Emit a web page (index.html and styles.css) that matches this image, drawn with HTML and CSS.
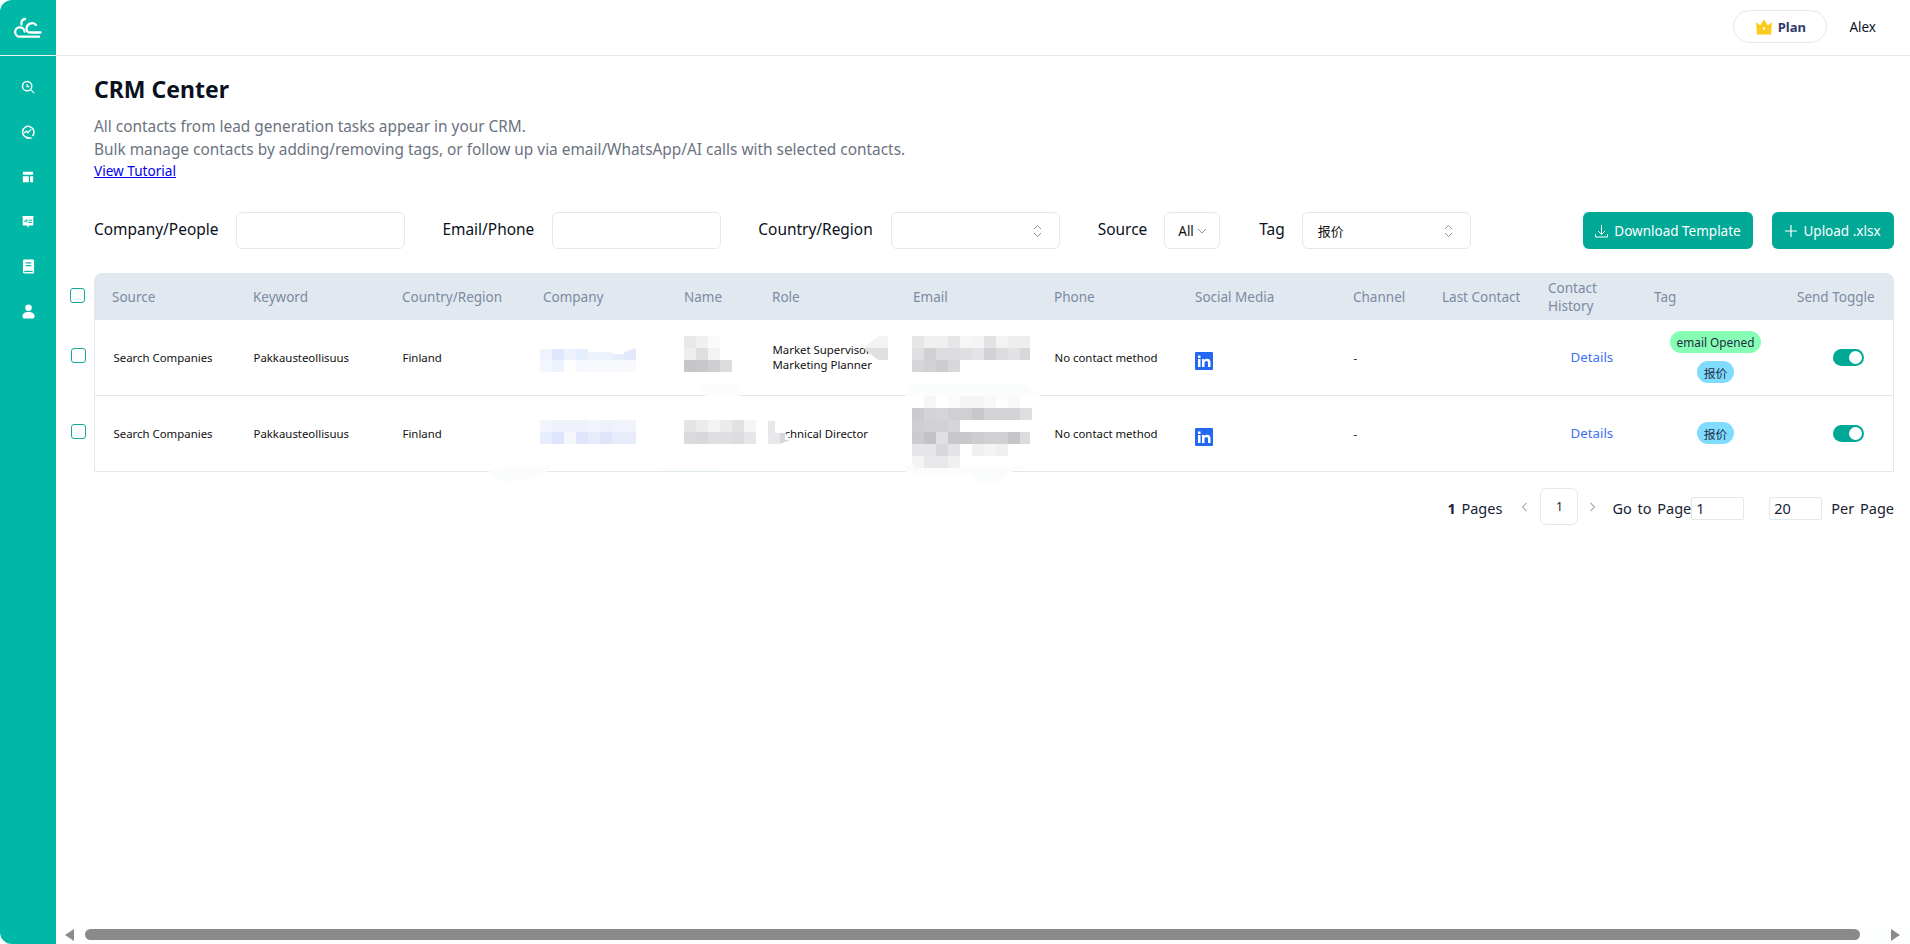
FILE: index.html
```html
<!DOCTYPE html>
<html lang="en">
<head>
    <meta charset="UTF-8">
    <meta name="viewport" content="width=device-width, initial-scale=1.0">
    <title>CRM Center</title>
    <link rel="stylesheet" href="styles.css">
</head>
<body>
<div class="app">
    <aside class="sidebar">
        <div class="logo">
            <svg width="30" height="26" viewBox="13 15 30 26" fill="none" stroke="#fff" stroke-width="2.300" stroke-linecap="round">
                <path d="M25 19c-2.500 .5-4 2.500-3.500 5.500"/>
                <path d="M24.500 31.500a4.700 4.700 0 1 0-4.500 5.200H39"/>
                <path d="M36 25a5.500 5.500 0 0 0-9.500 3.500c0 2.400 1.500 4 3.500 4H40.500"/>
            </svg>
        </div>
        <nav class="side-nav">
            <a class="side-item">
                <svg width="14" height="14" viewBox="0 0 16 16" fill="none" stroke="#fff" stroke-width="1.700">
                    <circle cx="7" cy="7" r="5.300"/>
                    <path d="M11 11l3.800 3.800" stroke-linecap="round" stroke-width="1.300"/>
                    <path d="M7 4.500V7.500H9.500" stroke-width="1.400"/>
                </svg>
            </a>
            <a class="side-item">
                <svg width="14" height="14" viewBox="0 0 16 16" fill="none" stroke="#fff" stroke-width="1.700">
                    <path d="M13 12.500A6.500 6.500 0 1 0 10 14.300"/>
                    <path d="M3.500 9L6.500 7l1.500 1.800L11.500 5" stroke-width="1.400"/>
                    <path d="M6 15h6.500" stroke-width="1.300"/>
                </svg>
            </a>
            <a class="side-item">
                <svg width="12" height="12" viewBox="0 0 14 14" fill="#fff">
                    <path d="M1 1h12v3.500H1zM1 6h7v7H1zM9.500 6H13v7H9.500z"/>
                </svg>
            </a>
            <a class="side-item">
                <svg width="14" height="14" viewBox="0 0 16 16" fill="#fff">
                    <path d="M1.500 1h13v1.300H14v9.700H8.700v2H7.300v-2H2V2.300h-.5zM3.500 8.500L6 6.300V5l-2.500 2.200zM6 8.500h1.200V5H6zM8.500 5.300v1.200h4V5.300zM8.500 8v1.200h4V8z" fill-rule="evenodd"/>
                </svg>
            </a>
            <a class="side-item">
                <svg width="13" height="15" viewBox="0 0 14 16" fill="#fff">
                    <path d="M2.500 .5h9A1.500 1.500 0 0 1 13 2v12.500a1 1 0 0 1-1 1H2.500A1.500 1.500 0 0 1 1 14V2A1.500 1.500 0 0 1 2.500 .5zM4 3.500v1.300h6V3.500zM4 6.300v1.300h6V6.300zM2.500 12.500v1.500H11.500v-1.500z" fill-rule="evenodd"/>
                </svg>
            </a>
            <a class="side-item">
                <svg width="13" height="15" viewBox="0 0 14 16" fill="#fff">
                    <circle cx="7" cy="4" r="3.500"/>
                    <path d="M0.500 13c0-3 3-4.500 6.500-4.500s6.500 1.500 6.500 4.500c0 1.500-1 2.500-2.500 2.500H3C1.500 15.500 .5 14.500 .5 13z"/>
                </svg>
            </a>
        </nav>
    </aside>

    <div class="main">
        <header class="topbar">
            <button class="plan-btn">
                <svg width="18" height="16" viewBox="0 0 18 16" fill="#fdc91a">
                    <path d="M1 3l4 3.500L9 .5l4 6L17 3l-1 12.500H2z"/>
                    <circle cx="9" cy="9.500" r="1.200" fill="#fff"/>
                </svg>
                Plan
            </button>
            <span class="user-name">Alex</span>
        </header>

        <div class="content">
            <h1>CRM Center</h1>
            <p class="desc">All contacts from lead generation tasks appear in your CRM.</p>
            <p class="desc">Bulk manage contacts by adding/removing tags, or follow up via email/WhatsApp/AI calls with selected contacts.</p>
            <a class="tutorial" href="#">View Tutorial</a>

            <div class="filters">
                <label class="filter"><span class="filter-label">Company/People</span> <input class="field"></label>
                <label class="filter"><span class="filter-label">Email/Phone</span> <input class="field"></label>
                <div class="filter"><span class="filter-label">Country/Region</span>
                    <div class="field select">
                        <span></span>
                        <svg class="updown" width="9" height="14" viewBox="0 0 9 14"><path d="M1 5l3.500-3.500L8 5M1 9l3.500 3.500L8 9"/></svg>
                    </div>
                </div>
                <div class="filter filter-tight filter-source"><span class="filter-label">Source</span>
                    <div class="field select select-small">
                        <span>All</span>
                        <svg class="updown" width="10" height="6" viewBox="0 0 10 6"><path d="M1 1l4 4 4-4"/></svg>
                    </div>
                </div>
                <div class="filter filter-tight filter-tag"><span class="filter-label">Tag</span>
                    <div class="field select">
                        <span class="cjk">报价</span>
                        <svg class="updown" width="9" height="14" viewBox="0 0 9 14"><path d="M1 5l3.500-3.500L8 5M1 9l3.500 3.500L8 9"/></svg>
                    </div>
                </div>
                <div class="actions">
                    <button class="btn btn-download">
                        <svg width="13" height="14" viewBox="0 0 13 14" fill="none" stroke="#fff"><path d="M6.500 1v9M3 7l3.500 3.500L10 7M.5 10v3h12v-3"/></svg>
                        Download Template
                    </button>
                    <button class="btn btn-upload">
                        <svg width="12" height="12" viewBox="0 0 12 12" fill="none" stroke="#fff" stroke-width="1.200"><path d="M6 0v12M0 6h12"/></svg>
                        Upload .xlsx
                    </button>
                </div>
            </div>

            <div class="table-area">
                <div class="checks">
                    <div class="check-cell check-head"><span class="checkbox"></span></div>
                    <div class="check-cell check-row"><span class="checkbox"></span></div>
                    <div class="check-cell check-row"><span class="checkbox"></span></div>
                </div>
                <div class="table-wrap">
                    <table class="crm-table">
                        <colgroup>
                            <col class="w141"><col class="w149"><col class="w141"><col class="w141"><col class="w88">
                            <col class="w141"><col class="w141"><col class="w141"><col class="w158"><col class="w89">
                            <col class="w106"><col class="w106"><col class="w143"><col class="w115">
                        </colgroup>
                        <thead>
                            <tr>
                                <th>Source</th><th>Keyword</th><th>Country/Region</th><th>Company</th><th>Name</th>
                                <th>Role</th><th>Email</th><th>Phone</th><th>Social Media</th><th>Channel</th>
                                <th>Last Contact</th><th>Contact History</th><th>Tag</th><th>Send Toggle</th>
                            </tr>
                        </thead>
                        <tbody>
                            <tr>
                                <td>Search Companies</td><td>Pakkausteollisuus</td><td>Finland</td><td></td><td></td>
                                <td>Market Supervisor<br>Marketing Planner</td><td></td><td>No contact method</td>
                                <td><svg class="linkedin" width="18" height="18" viewBox="0 0 18 18"><rect width="18" height="18" rx="1" fill="#2468f2"/><path fill="#fff" d="M3 7h2.500v8H3zM3 3.500h2.500V6H3zM7 7h2.400v1.200C10 7.300 11 6.800 12.200 6.800c2.300 0 3.300 1.400 3.300 3.800V15H13v-3.900c0-1.300-.4-2.100-1.500-2.100S9.500 9.800 9.500 11.100V15H7z"/></svg></td>
                                <td>-</td><td></td><td><a class="details">Details</a></td>
                                <td class="tag-cell"><div class="tags"><span class="tag tag-green">email Opened</span><span class="tag tag-blue cjk">报价</span></div></td>
                                <td><span class="toggle"></span></td>
                            </tr>
                            <tr>
                                <td>Search Companies</td><td>Pakkausteollisuus</td><td>Finland</td><td></td><td></td>
                                <td>Technical Director</td><td></td><td>No contact method</td>
                                <td><svg class="linkedin" width="18" height="18" viewBox="0 0 18 18"><rect width="18" height="18" rx="1" fill="#2468f2"/><path fill="#fff" d="M3 7h2.500v8H3zM3 3.500h2.500V6H3zM7 7h2.400v1.200C10 7.300 11 6.800 12.200 6.800c2.300 0 3.300 1.400 3.300 3.800V15H13v-3.900c0-1.300-.4-2.100-1.500-2.100S9.500 9.800 9.500 11.100V15H7z"/></svg></td>
                                <td>-</td><td></td><td><a class="details">Details</a></td>
                                <td class="tag-cell"><div class="tags"><span class="tag tag-blue cjk">报价</span></div></td>
                                <td><span class="toggle"></span></td>
                            </tr>
                        </tbody>
                    </table>

                    <!-- redacted areas, viewBox is in page coordinates -->
                    <svg class="mosaic" width="1800" height="198" viewBox="94 273 1800 198">
                        <g fill="#fbfcfc">
                            <path d="M697 385h44l-1 11h-34zM906 386l10-2h110l14 12h-30l-2 5-20 1-8-6H906zM487 470l18-4h46l-8 10-40 6zM906 466h120l-16 6-10 10h-20l-10-8h-50l-14-2zM660 468h60v3h-60z"/>
                        </g>
                        <!-- company, row 1 -->
                        <path fill="#eff3fd" d="M540 349h12v11h-12z"/><path fill="#dfe7fd" d="M552 349h12v11h-12z"/><path fill="#eef1fb" d="M564 349h12v11h-12z"/><path fill="#e4eefc" d="M576 349h12v11h-12z"/>
                        <path fill="#eef2fb" d="M588 352h24v8h-24z"/><path fill="#e8edfb" d="M612 354h12v6h-12z"/><path fill="#e4e9fa" d="M624 352l12-4v12h-12z"/>
                        <path fill="#f3f6fe" d="M540 360h12v12h-12z"/><path fill="#ecf2fe" d="M552 360h12v12h-12z"/><path fill="#fdfefe" d="M564 360h12v12h-12z"/><path fill="#f5f8fe" d="M576 360h12v12h-12z"/><path fill="#f7f9fd" d="M588 360h48v12h-48z"/>
                        <!-- name, row 1 -->
                        <path fill="#e8e8ea" d="M684 336h12v12h-12z"/><path fill="#f0f0f1" d="M696 336h12v12h-12z"/><path fill="#fbfbfb" d="M708 336h12v12h-12z"/>
                        <path fill="#eeeeef" d="M684 348h12v12h-12z"/><path fill="#dedee0" d="M696 348h12v12h-12z"/><path fill="#f3f3f4" d="M708 348h12v12h-12z"/>
                        <path fill="#c6c6ca" d="M684 360h12v12h-12z"/><path fill="#c8c8cb" d="M696 360h12v12h-12z"/><path fill="#cfcfd2" d="M708 360h12v12h-12z"/><path fill="#dcdcde" d="M720 360h12v12h-12z"/>
                        <!-- role, row 1 -->
                        <path fill="#f3f3f4" d="M863 348l16-12h9v12z"/><path fill="#e0e0e2" d="M863 348h25v12h-10z"/>
                        <!-- email, row 1 -->
                        <path fill="#e6e6e8" d="M912 336h12v12h-12z"/><path fill="#f0f0f1" d="M924 336h24v12h-24z"/><path fill="#e6e6e8" d="M948 336h12v12h-12z"/><path fill="#f6f6f7" d="M960 336h12v12h-12z"/><path fill="#f4f4f5" d="M972 336h12v12h-12z"/><path fill="#e2e2e5" d="M984 336h12v12h-12z"/><path fill="#f3f3f4" d="M996 336h12v12h-12z"/><path fill="#eeeeef" d="M1008 336h22v12h-22z"/>
                        <path fill="#e0e0e2" d="M912 348h12v12h-12z"/><path fill="#d0d0d3" d="M924 348h12v12h-12z"/><path fill="#dcdce0" d="M936 348h24v12h-24z"/><path fill="#dfdfe2" d="M960 348h12v12h-12z"/><path fill="#e4e4e6" d="M972 348h12v12h-12z"/><path fill="#d2d2d6" d="M984 348h12v12h-12z"/><path fill="#dcdcdf" d="M996 348h12v12h-12z"/><path fill="#e2e2e4" d="M1008 348h12v12h-12z"/><path fill="#d8d8dc" d="M1020 348h10v12h-10z"/>
                        <path fill="#d6d6d9" d="M912 360h12v12h-12z"/><path fill="#d2d2d5" d="M924 360h12v12h-12z"/><path fill="#cdcdd0" d="M936 360h12v12h-12z"/><path fill="#d8d8db" d="M948 360h12v12h-12z"/>
                        <!-- company, row 2 -->
                        <path fill="#f3f5fc" d="M540 420h12v12h-12z"/><path fill="#eef2fc" d="M552 420h12v12h-12z"/><path fill="#eff2fa" d="M564 420h12v12h-12z"/><path fill="#eef2fc" d="M576 420h12v12h-12z"/><path fill="#f3f5fc" d="M588 420h12v12h-12z"/><path fill="#edf1fc" d="M600 420h12v12h-12z"/><path fill="#f0f3fb" d="M612 420h24v12h-24z"/>
                        <path fill="#e8edfb" d="M540 432h12v12h-12z"/><path fill="#dde5fc" d="M552 432h12v12h-12z"/><path fill="#f4f6fb" d="M564 432h12v12h-12z"/><path fill="#dfe6fc" d="M576 432h12v12h-12z"/><path fill="#e8ecfa" d="M588 432h12v12h-12z"/><path fill="#dee5fb" d="M600 432h12v12h-12z"/><path fill="#e8ecfa" d="M612 432h24v12h-24z"/>
                        <!-- name, row 2 -->
                        <path fill="#e4e4e6" d="M684 420h12v12h-12z"/><path fill="#ebebec" d="M696 420h12v12h-12z"/><path fill="#f3f3f4" d="M708 420h12v12h-12z"/><path fill="#ebebec" d="M720 420h12v12h-12z"/><path fill="#e2e2e4" d="M732 420h12v12h-12z"/><path fill="#f5f5f6" d="M744 420h12v12h-12z"/>
                        <path fill="#dbdbdd" d="M684 432h12v12h-12z"/><path fill="#d8d8da" d="M696 432h12v12h-12z"/><path fill="#dfdfe1" d="M708 432h24v12h-24z"/><path fill="#dcdcdf" d="M732 432h12v12h-12z"/><path fill="#e6e6e8" d="M744 432h12v12h-12z"/>
                        <!-- role, row 2 -->
                        <path fill="#e8e8ea" d="M768 421h7l10 12h-5v11h-12z"/><path fill="#d8d8db" d="M780 433h5l5 7-10 4z"/><path fill="#fff" d="M775 421h10v12h-10zM785 433l5 7h-5z"/>
                        <!-- email, row 2 -->
                        <path fill="#f6f6f7" d="M924 396h12v12h-12z"/><path fill="#fbfbfb" d="M948 396h12v12h-12z"/><path fill="#f5f5f6" d="M960 396h24v12h-24z"/><path fill="#f8f8f9" d="M984 396h12v12h-12zM1008 396h12v12h-12z"/>
                        <path fill="#cccccf" d="M912 408h12v12h-12z"/><path fill="#d4d4d6" d="M924 408h12v12h-12z"/><path fill="#d6d6d8" d="M936 408h12v12h-12z"/><path fill="#d0d0d3" d="M948 408h24v12h-24z"/><path fill="#c8c8cb" d="M972 408h12v12h-12z"/><path fill="#d4d4d7" d="M984 408h36v12h-36z"/><path fill="#dfdfe1" d="M1020 408h12v12h-12z"/>
                        <path fill="#cfcfd2" d="M912 420h12v12h-12z"/><path fill="#d2d2d5" d="M924 420h24v12h-24z"/><path fill="#d6d6d9" d="M948 420h12v12h-12z"/>
                        <path fill="#cccccf" d="M912 432h12v12h-12z"/><path fill="#c3c3c7" d="M924 432h12v12h-12z"/><path fill="#e0e0e2" d="M936 432h12v12h-12z"/><path fill="#c8c8cc" d="M948 432h24v12h-24z"/><path fill="#cdcdd0" d="M972 432h12v12h-12z"/><path fill="#d0d0d3" d="M984 432h24v12h-24z"/><path fill="#c6c6ca" d="M1008 432h12v12h-12z"/><path fill="#dcdcde" d="M1020 432h10v12h-10z"/>
                        <path fill="#e6e6e8" d="M912 444h24v12h-24z"/><path fill="#d8d8db" d="M936 444h12v12h-12z"/><path fill="#e4e4e6" d="M948 444h12v12h-12z"/><path fill="#f0f0f1" d="M972 444h12v12h-12zM996 444h12v12h-12z"/><path fill="#f4f4f5" d="M984 444h12v12h-12z"/>
                        <path fill="#f4f4f5" d="M912 456h12v12h-8l-4-4z"/><path fill="#e8e8ea" d="M924 456h24v12h-24z"/><path fill="#f0f0f1" d="M948 456h12v12h-12z"/>
                    </svg>
                </div>
            </div>

            <div class="pagination">
                <span class="page-text"><b>1</b> Pages</span>
                <svg class="page-arrow arrow-prev" width="7" height="10" viewBox="0 0 7 10"><path d="M5.500 1l-4 4 4 4"/></svg>
                <span class="page-box">1</span>
                <svg class="page-arrow arrow-next" width="7" height="10" viewBox="0 0 7 10"><path d="M1.500 1l4 4-4 4"/></svg>
                <span class="page-text">Go to Page</span>
                <input class="page-input" value="1">
                <input class="page-input page-size" value="20">
                <span class="page-text">Per Page</span>
            </div>
        </div>

        <div class="scrollbar">
            <span class="scroll-arrow scroll-left"></span>
            <span class="scroll-thumb"></span>
            <span class="scroll-arrow scroll-right"></span>
        </div>
    </div>
</div>
</body>
</html>
```

FILE: styles.css
```css
:root {
    --teal: #00b8a5;
    --green: #00a896;
    --line: #e2e8f0;
    --ink: #0f172a;
}

* {
    margin: 0;
    padding: 0;
    box-sizing: border-box;
    font-family: "Noto Sans", "Noto Sans CJK SC", sans-serif;
}

html, body {
    height: 100%;
    overflow: hidden;
    background-color: #fff;
}

.app {
    display: flex;
    height: 944px;
}

.sidebar {
    width: 56px;
    flex-shrink: 0;
    background-color: var(--teal);
    border-radius: 12px 0 0 12px;
}

.logo {
    height: 56px;
    display: flex;
    align-items: center;
    justify-content: center;
    border-bottom: 1px solid #e6f4f2;
}

.side-nav {
    padding-top: 8px;
}

.side-item {
    height: 45px;
    display: flex;
    align-items: center;
    justify-content: center;
}

.main {
    flex: 1;
    min-width: 0;
    display: flex;
    flex-direction: column;
}

.topbar {
    height: 56px;
    flex-shrink: 0;
    display: flex;
    align-items: center;
    justify-content: flex-end;
    gap: 22px;
    padding: 0 34px 2px 0;
    border-bottom: 1px solid #e5e7eb;
}

.plan-btn {
    width: 94px;
    height: 33px;
    display: flex;
    align-items: center;
    justify-content: center;
    gap: 5px;
    background-color: #fff;
    border: 1px solid var(--line);
    border-radius: 17px;
    color: #2f3b6c;
    font-size: 13px;
    font-weight: 700;
}

.user-name {
    font-size: 13.500px;
    color: var(--ink);
}

.content {
    flex: 1;
    padding: 15px 16px 0 38px;
}

h1 {
    font-size: 23px;
    font-weight: 700;
    line-height: 36px;
    color: #0b1020;
    margin-bottom: 8px;
}

.desc {
    font-size: 15.400px;
    line-height: 23px;
    color: #6b7280;
}

.tutorial {
    display: block;
    width: max-content;
    font-size: 13.600px;
    line-height: 20px;
    color: #0000ee;
}

.filters {
    display: flex;
    align-items: center;
    gap: 37px;
    margin-top: 31px;
}

.filter {
    display: flex;
    align-items: center;
    gap: 18px;
    font-size: 15.450px;
    color: #0b1020;
    white-space: nowrap;
}

.filter-label {
    margin-bottom: 3px;
}

.filter-tight {
    gap: 17px;
}

.filter-source {
    margin-left: 1px;
}

.filter-tag {
    margin-left: 2px;
}

.field {
    width: 169px;
    height: 37px;
    background-color: #fff;
    border: 1px solid var(--line);
    border-radius: 6px;
    outline: none;
    font-size: 13px;
}

.select {
    display: flex;
    align-items: center;
    justify-content: space-between;
    padding: 0 17px 0 15px;
    color: #111;
}

.select-small {
    width: 56px;
    justify-content: flex-start;
    gap: 3px;
    padding: 0 0 0 13px;
    font-size: 13.500px;
}

.updown {
    fill: none;
    stroke: #8a93a3;
    stroke-width: 1;
}

.cjk {
    font-family: "Noto Sans CJK SC", "Noto Sans", sans-serif;
}

.actions {
    display: flex;
    gap: 19px;
    margin-left: auto;
}

.btn {
    height: 37px;
    display: flex;
    align-items: center;
    justify-content: center;
    gap: 6px;
    background-color: var(--green);
    border: none;
    border-radius: 6px;
    color: #fff;
    font-size: 13.500px;
}

.btn-download {
    width: 170px;
}

.btn-upload {
    width: 122px;
}

.table-area {
    display: flex;
    margin: 24px 0 0 -24px;
}

.checks {
    width: 24px;
    flex-shrink: 0;
}

.check-cell {
    display: flex;
    align-items: center;
}

.check-head {
    height: 47px;
    padding-bottom: 3px;
}

.check-row {
    height: 76px;
    padding: 0 0 5px 1px;
}

.checkbox {
    width: 15px;
    height: 15px;
    background-color: #fff;
    border: 1px solid #12a99a;
    border-radius: 3px;
}

.table-wrap {
    position: relative;
    width: 1800px;
}

.crm-table {
    width: 1800px;
    table-layout: fixed;
    border-collapse: separate;
    border-spacing: 0;
}

.w88 { width: 88px; }
.w89 { width: 89px; }
.w106 { width: 106px; }
.w115 { width: 115px; }
.w141 { width: 141px; }
.w143 { width: 143px; }
.w149 { width: 149px; }
.w158 { width: 158px; }

.crm-table th {
    height: 47px;
    padding: 0 0 0 18px;
    background-color: var(--line);
    color: #7b8ba3;
    font-size: 13.500px;
    font-weight: 400;
    line-height: 18px;
    text-align: left;
}

.crm-table th:first-child {
    border-top-left-radius: 8px;
}

.crm-table th:last-child {
    border-top-right-radius: 8px;
}

.crm-table td {
    height: 76px;
    padding: 0 0 1px 18.500px;
    border-bottom: 1px solid var(--line);
    color: #111;
    font-size: 11.400px;
    line-height: 15px;
    white-space: nowrap;
}

.crm-table td:first-child {
    border-left: 1px solid var(--line);
}

.crm-table td:last-child {
    border-right: 1px solid var(--line);
}

.linkedin {
    display: block;
    margin: 7px 0 0 -1px;
}

.details {
    margin-left: 22px;
    color: #4070f4;
    font-size: 13.300px;
}

.crm-table td.tag-cell {
    padding: 0 0 1px 16px;
}

.tags {
    display: flex;
    flex-direction: column;
    align-items: center;
    gap: 8px;
}

.tag {
    height: 22px;
    display: flex;
    align-items: center;
    padding: 0 7px;
    border-radius: 11px;
    color: #222b45;
    font-size: 11.800px;
}

.tag-green {
    background-color: #86ffb4;
}

.tag-blue {
    background-color: #7fdcff;
    padding: 0 7px;
}

.toggle {
    position: relative;
    display: block;
    width: 31px;
    height: 17px;
    margin-left: 35px;
    background-color: var(--green);
    border-radius: 9px;
}

.toggle::after {
    content: "";
    position: absolute;
    top: 2px;
    right: 2px;
    width: 13px;
    height: 13px;
    background-color: #fff;
    border-radius: 50%;
}

.mosaic {
    position: absolute;
    top: 0;
    left: 0;
    overflow: visible;
    pointer-events: none;
}

.pagination {
    display: flex;
    align-items: center;
    justify-content: flex-end;
    margin-top: 16px;
    font-size: 14.500px;
    color: #1a2233;
}

.page-text {
    margin-top: 3px;
    word-spacing: 2px;
    white-space: nowrap;
}

.page-arrow {
    fill: none;
    stroke: #a9b0bb;
    stroke-width: 1.200;
}

.arrow-prev {
    margin: 0 12px 0 19px;
}

.arrow-next {
    margin: 0 16px 0 11px;
}

.page-box {
    width: 38px;
    height: 37px;
    display: flex;
    align-items: center;
    justify-content: center;
    background-color: #fff;
    border: 1px solid var(--line);
    border-radius: 6px;
    font-size: 12px;
}

.page-input {
    width: 53px;
    height: 23px;
    margin-top: 3px;
    padding-left: 4px;
    border: 1px solid var(--line);
    border-radius: 2px;
    outline: none;
    font-size: 14.500px;
    color: #1a2233;
}

.page-size {
    margin: 3px 9px 0 25px;
}

.scrollbar {
    height: 18px;
    flex-shrink: 0;
    display: flex;
    align-items: center;
    padding: 0 0 1px 9px;
    background-color: #fdfefe;
}

.scroll-arrow {
    flex-shrink: 0;
    width: 0;
    height: 0;
    border-top: 6px solid transparent;
    border-bottom: 6px solid transparent;
}

.scroll-left {
    border-right: 9px solid #8a8a8a;
}

.scroll-right {
    border-left: 9px solid #8a8a8a;
    margin-left: 31px;
}

.scroll-thumb {
    flex-shrink: 0;
    width: 1775px;
    height: 11px;
    margin-left: 11px;
    background-color: #8a8a8a;
    border-radius: 6px;
}
```
